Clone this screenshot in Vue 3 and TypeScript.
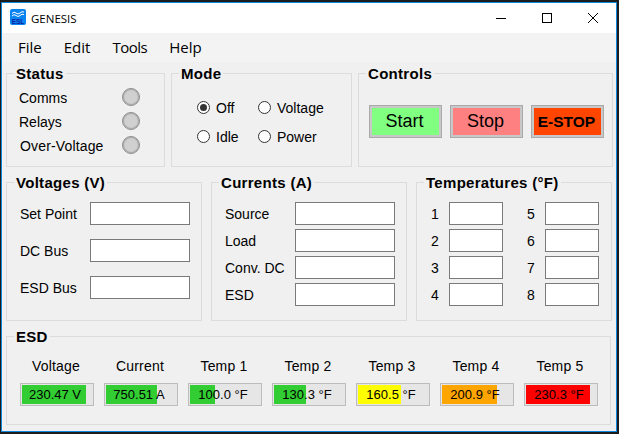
<script setup lang="ts">
const menus = ["File", "Edit", "Tools", "Help"];
const statusRows = ["Comms", "Relays", "Over-Voltage"];
const modes = [
	{ label: "Off", checked: true },
	{ label: "Voltage", checked: false },
	{ label: "Idle", checked: false },
	{ label: "Power", checked: false },
];
const voltages = ["Set Point", "DC Bus", "ESD Bus"];
const currents = ["Source", "Load", "Conv. DC", "ESD"];
const temps = [1, 5, 2, 6, 3, 7, 4, 8];
const meters = [
	{ name: "Voltage", value: "230.47 V", pct: 91, color: "#32cd32" },
	{ name: "Current", value: "750.51 A", pct: 73, color: "#32cd32" },
	{ name: "Temp 1", value: "100.0 °F", pct: 36, color: "#32cd32" },
	{ name: "Temp 2", value: "130.3 °F", pct: 46, color: "#32cd32" },
	{ name: "Temp 3", value: "160.5 °F", pct: 62, color: "#ffff00" },
	{ name: "Temp 4", value: "200.9 °F", pct: 79, color: "#ffa500" },
	{ name: "Temp 5", value: "230.3 °F", pct: 91, color: "#ff0000" },
];
</script>

<template>
	<div class="frame">
		<div class="window">
			<div class="titlebar">
				<svg class="app-icon" width="16" height="16" viewBox="0 0 16 16">
					<rect width="16" height="16" rx="2" fill="#0a84f0" />
					<path d="M2 4.500 Q4 2 6 4 T10 4 T14 3 M2 7 Q4 4.500 6 6.500 T10 6.500 T14 5.500" fill="none" stroke="#fff" stroke-width="1" />
					<text x="8" y="14.500" class="app-icon-text">ESL</text>
				</svg>
				<span class="title">GENESIS</span>
				<div class="caption-buttons">
					<svg width="10" height="10" viewBox="0 0 10 10"><path d="M0 5.500H10" stroke="#000" fill="none" /></svg>
					<svg width="10" height="10" viewBox="0 0 10 10"><rect x="0.500" y="0.500" width="9" height="9" stroke="#000" fill="none" /></svg>
					<svg width="10" height="10" viewBox="0 0 10 10"><path d="M0 0L10 10M10 0L0 10" stroke="#000" fill="none" /></svg>
				</div>
			</div>
			<div class="menubar">
				<span v-for="m in menus" :key="m" class="menu-item">{{ m }}</span>
			</div>
			<div class="client">
				<div class="row">
					<fieldset class="group status">
						<legend>Status</legend>
						<div v-for="s in statusRows" :key="s" class="status-row">
							<span>{{ s }}</span>
							<i class="led"></i>
						</div>
					</fieldset>
					<fieldset class="group mode">
						<legend>Mode</legend>
						<div class="mode-grid">
							<label v-for="m in modes" :key="m.label" class="radio">
								<i class="radio-dot" :class="{ checked: m.checked }"></i>{{ m.label }}
							</label>
						</div>
					</fieldset>
					<fieldset class="group controls">
						<legend>Controls</legend>
						<div class="control-row">
							<button class="ctl start">Start</button>
							<button class="ctl stop">Stop</button>
							<button class="ctl estop">E-STOP</button>
						</div>
					</fieldset>
				</div>
				<div class="row row-mid">
					<fieldset class="group third">
						<legend>Voltages (V)</legend>
						<div class="volt-list">
							<div v-for="v in voltages" :key="v" class="field">
								<span>{{ v }}</span>
								<input class="box" />
							</div>
						</div>
					</fieldset>
					<fieldset class="group third">
						<legend>Currents (A)</legend>
						<div class="curr-list">
							<div v-for="c in currents" :key="c" class="field">
								<span>{{ c }}</span>
								<input class="box" />
							</div>
						</div>
					</fieldset>
					<fieldset class="group third">
						<legend>Temperatures (°F)</legend>
						<div class="temp-grid">
							<div v-for="t in temps" :key="t" class="temp-field">
								<span>{{ t }}</span>
								<input class="box small" />
							</div>
						</div>
					</fieldset>
				</div>
				<fieldset class="group esd">
					<legend>ESD</legend>
					<div class="meter-row">
						<div v-for="m in meters" :key="m.name" class="meter">
							<div class="meter-name">{{ m.name }}</div>
							<div class="meter-track">
								<div class="meter-fill" :style="{ width: m.pct + '%', background: m.color }"></div>
								<span class="meter-value">{{ m.value }}</span>
							</div>
						</div>
					</div>
				</fieldset>
			</div>
		</div>
	</div>
</template>

<style>
html,
body {
	margin: 0;
	background: #1c1c1c;
}
</style>

<style scoped>
.frame {
	width: 619px;
	height: 434px;
	box-sizing: border-box;
	padding: 2px 2px 2px 1px;
	background: #1c1c1c;
}
.window {
	height: 100%;
	box-sizing: border-box;
	border: 1px solid #0f86dc;
	background: #f0f0f0;
	font-family: "Liberation Sans", Arial, sans-serif;
	font-size: 14px;
	color: #000;
	display: flex;
	flex-direction: column;
	overflow: hidden;
}
.titlebar {
	height: 30px;
	background: #fff;
	display: flex;
	align-items: center;
	padding-left: 8px;
	flex: none;
}
.app-icon {
	flex: none;
	margin-top: -2px;
}
.app-icon-text {
	font: bold 6.500px "Liberation Sans", sans-serif;
	fill: #0a1ea0;
	text-anchor: middle;
}
.title {
	margin-left: 5px;
	font-family: "Open Sans", sans-serif;
	font-size: 11.500px;
}
.caption-buttons {
	margin-left: auto;
	display: flex;
	gap: 36px;
	padding-right: 18px;
}
.menubar {
	height: 29px;
	background: #f3f3f3;
	display: flex;
	align-items: center;
	gap: 22px;
	padding-left: 16px;
	flex: none;
}
.menu-item {
	font-family: "Open Sans", sans-serif;
	font-size: 15px;
	margin-top: -1px;
}
.menu-item:nth-child(3) {
	letter-spacing: -0.5px;
}
.client {
	flex: 1;
	padding: 3px 0 0 4px;
	display: flex;
	flex-direction: column;
	gap: 7px;
}
.row {
	display: flex;
	gap: 6px;
}
.row-mid {
	gap: 9px;
}
.group {
	margin: 0;
	padding: 0;
	min-width: 0;
	box-sizing: border-box;
	border: 1px solid #dcdcdc;
}
.group legend {
	margin-left: 7px;
	padding: 0 2px;
	font-size: 15px;
	font-weight: bold;
	letter-spacing: 0.3px;
	line-height: 16px;
	position: relative;
	top: 1px;
}
.status {
	width: 159px;
	height: 102px;
	padding-top: 5px;
}
.status-row {
	display: flex;
	align-items: center;
	justify-content: space-between;
	height: 24px;
	padding: 0 24px 0 12px;
}
.status-row:last-child span {
	margin-left: 1px;
	letter-spacing: 0.15px;
}
.led {
	width: 18px;
	height: 18px;
	margin-bottom: 2px;
	box-sizing: border-box;
	border-radius: 50%;
	background: #d0d0d0;
	border: 1px solid #8f8f8f;
	box-shadow: inset 0 0 1px 1px #a8a8a8;
}
.mode {
	width: 181px;
	height: 102px;
}
.mode-grid {
	display: grid;
	grid-template-columns: 61px auto;
	row-gap: 12px;
	padding: 19px 0 0 25px;
}
.radio {
	display: flex;
	align-items: center;
	gap: 6px;
	line-height: 17px;
}
.radio-dot {
	width: 13px;
	height: 13px;
	margin-top: -2px;
	box-sizing: border-box;
	border: 1px solid #333;
	border-radius: 50%;
	background: #fff;
	display: block;
	position: relative;
}
.radio-dot.checked::after {
	content: "";
	position: absolute;
	left: 2px;
	top: 2px;
	width: 7px;
	height: 7px;
	border-radius: 50%;
	background: #333;
}
.controls {
	width: 255px;
	height: 102px;
}
.control-row {
	display: flex;
	gap: 8px;
	padding: 24px 0 0 10px;
}
.ctl {
	width: 73px;
	height: 33px;
	box-sizing: border-box;
	border: 3px solid #c8c8c8;
	outline: 1px solid #aaa;
	outline-offset: -1px;
	padding: 0 2px 0 0;
	font-family: "Liberation Sans", sans-serif;
	font-size: 18px;
	color: #000;
}
.start {
	background: #80ff80;
}
.stop {
	background: #ff8080;
}
.estop {
	background: #ff4500;
	font-size: 15.500px;
	font-weight: bold;
}
.third {
	width: 196px;
	height: 147px;
}
.volt-list {
	display: flex;
	flex-direction: column;
	gap: 14px;
	padding: 12px 11px 0 13px;
}
.curr-list {
	display: flex;
	flex-direction: column;
	gap: 4px;
	padding: 12px 11px 0 13px;
}
.field {
	display: flex;
	align-items: center;
	justify-content: space-between;
}
.box {
	width: 100px;
	height: 23px;
	box-sizing: border-box;
	border: 1px solid #7a7a7a;
	background: #fff;
	padding: 0;
	margin: 0;
	border-radius: 0;
	outline: none;
}
.box.small {
	width: 54px;
}
.temp-grid {
	display: grid;
	grid-template-columns: 72px 72px;
	column-gap: 24px;
	row-gap: 4px;
	padding: 12px 0 0 14px;
}
.temp-field {
	display: flex;
	align-items: center;
	justify-content: space-between;
}
.esd {
	width: 605px;
	height: 97px;
}
.meter-row {
	display: flex;
	gap: 10px;
	padding: 12px 0 0 13px;
}
.meter {
	width: 74px;
	text-align: center;
}
.meter-name {
	height: 21px;
	line-height: 21px;
	margin-bottom: 6px;
	padding-right: 2px;
	letter-spacing: 0.2px;
}
.meter-track {
	position: relative;
	height: 23px;
	box-sizing: border-box;
	border: 1px solid #bcbcbc;
	background: #e6e6e6;
	padding: 1px;
	font-size: 13px;
}
.meter-fill {
	height: 100%;
}
.meter-value {
	position: absolute;
	left: 0;
	right: 4px;
	top: 1px;
	line-height: 19px;
}
</style>
